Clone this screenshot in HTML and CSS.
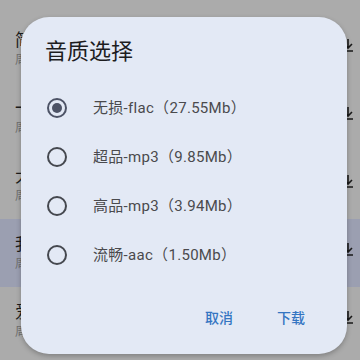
FILE: index.html
```html
<!DOCTYPE html>
<html>

<head>
  <title>音质选择</title>
  <link rel="stylesheet" href="styles.css">
</head>

<body>

  <div class="liste">
    <div class="ligne">
      <div class="infos">
        <div class="titre">简单爱</div>
        <div class="sous-titre">周杰伦</div>
      </div>
      <svg class="dl" viewBox="0 0 16 16"><path d="M8 2v9M4 7l4 4 4-4M3 14h10" fill="none" stroke="#1a1a1a" stroke-width="1.6"/></svg>
    </div>
    <div class="ligne">
      <div class="infos">
        <div class="titre">一路向北</div>
        <div class="sous-titre">周杰伦</div>
      </div>
      <svg class="dl" viewBox="0 0 16 16"><path d="M8 2v9M4 7l4 4 4-4M3 14h10" fill="none" stroke="#1a1a1a" stroke-width="1.6"/></svg>
    </div>
    <div class="ligne">
      <div class="infos">
        <div class="titre">大笨钟</div>
        <div class="sous-titre">周杰伦</div>
      </div>
      <svg class="dl" viewBox="0 0 16 16"><path d="M8 2v9M4 7l4 4 4-4M3 14h10" fill="none" stroke="#1a1a1a" stroke-width="1.6"/></svg>
    </div>
    <div class="ligne active">
      <div class="infos">
        <div class="titre">我不配</div>
        <div class="sous-titre">周杰伦</div>
      </div>
      <svg class="dl" viewBox="0 0 16 16"><path d="M8 2v9M4 7l4 4 4-4M3 14h10" fill="none" stroke="#1a1a1a" stroke-width="1.6"/></svg>
    </div>
    <div class="ligne">
      <div class="infos">
        <div class="titre">爱在西元前</div>
        <div class="sous-titre">周杰伦</div>
      </div>
      <svg class="dl" viewBox="0 0 16 16"><path d="M8 2v9M4 7l4 4 4-4M3 14h10" fill="none" stroke="#1a1a1a" stroke-width="1.6"/></svg>
    </div>
  </div>

  <div class="dialogue">
    <div class="dialogue-titre">音质选择</div>

    <div class="options">
      <label class="option">
        <span class="radio coche"></span>
        <span class="texte">无损-flac（27.55Mb）</span>
      </label>
      <label class="option">
        <span class="radio"></span>
        <span class="texte">超品-mp3（9.85Mb）</span>
      </label>
      <label class="option">
        <span class="radio"></span>
        <span class="texte">高品-mp3（3.94Mb）</span>
      </label>
      <label class="option">
        <span class="radio"></span>
        <span class="texte">流畅-aac（1.50Mb）</span>
      </label>
    </div>

    <div class="actions">
      <span class="bouton">取消</span>
      <span class="bouton">下载</span>
    </div>
  </div>

</body>

</html>
```

FILE: styles.css
```css
body {
  margin: 0;
  width: 360px;
  height: 360px;
  overflow: hidden;
  background: #ababab;
  font-family: Roboto, "Noto Sans CJK SC", sans-serif;
  position: relative;
}

.liste {
  padding-top: 15px;
}

.ligne {
  height: 68px;
  display: flex;
  align-items: center;
  justify-content: space-between;
  padding: 0 4px 0 15px;
  box-sizing: border-box;
}

.ligne.active {
  background: #9b9fb1;
}

.titre {
  font-size: 17px;
  line-height: 22px;
  color: #1c1c1c;
}

.sous-titre {
  font-size: 12px;
  line-height: 18px;
  color: #6e6e6e;
}

.dl {
  width: 16px;
  height: 16px;
  margin-bottom: 8px;
}

/* la boite de dialogue est posée par-dessus la liste */
.dialogue {
  position: absolute;
  left: 21px;
  top: 17px;
  width: 326px;
  background: #e3e9f5;
  border-radius: 28px;
  box-shadow: 0 2px 5px rgba(0, 0, 0, 0.25);
  padding: 20px 0 18px;
  box-sizing: border-box;
}

.dialogue-titre {
  font-size: 22px;
  line-height: 30px;
  color: #1d1d1f;
  padding-left: 24px;
}

.options {
  margin-top: 16px;
}

.option {
  height: 49px;
  display: flex;
  align-items: center;
  padding-left: 26px;
}

.radio {
  width: 20px;
  height: 20px;
  box-sizing: border-box;
  border: 2px solid #45484f;
  border-radius: 50%;
  display: flex;
  justify-content: center;
  align-items: center;
}

.radio.coche {
  border-color: #4d5366;
}

.radio.coche::after {
  content: "";
  width: 10px;
  height: 10px;
  border-radius: 50%;
  background: #4d5366;
}

.texte {
  margin-left: 26px;
  font-size: 15px;
  line-height: 20px;
  letter-spacing: 0.3px;
  color: #4a4a4d;
}

.actions {
  margin-top: 21px;
  display: flex;
  justify-content: flex-end;
  gap: 20px;
  padding-right: 30px;
}

.bouton {
  height: 36px;
  line-height: 36px;
  padding: 0 12px;
  font-size: 14px;
  font-weight: 500;
  color: #3475c2;
}
```
